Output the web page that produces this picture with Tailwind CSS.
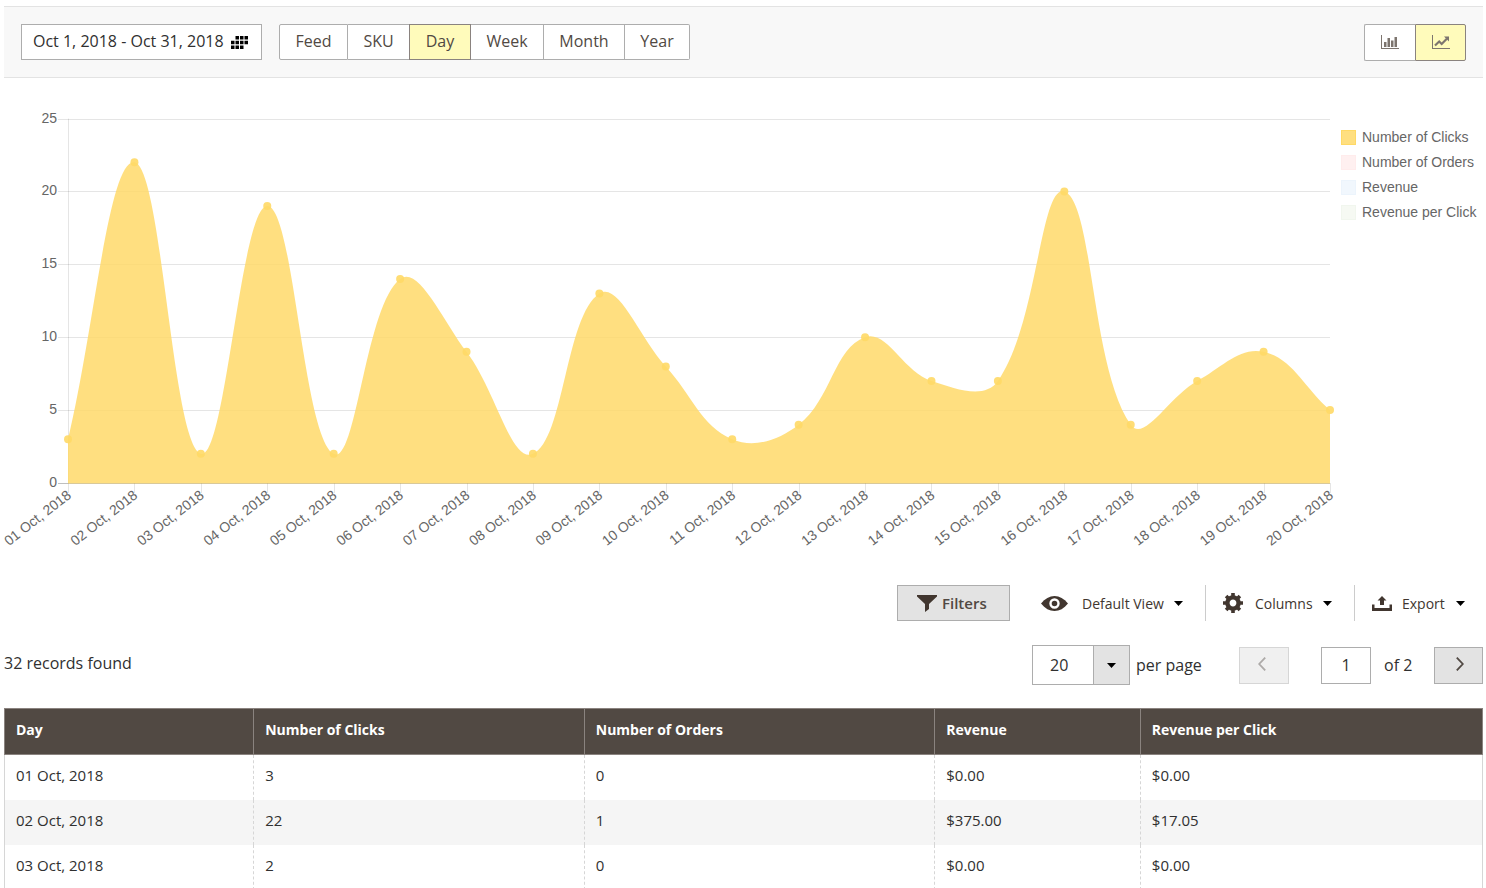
<!doctype html>
<html lang="en">

<head>
    <meta charset="utf-8">
    <meta name="viewport" content="width=device-width, initial-scale=1">
    <title>Feed Report</title>
    <script src="https://cdn.jsdelivr.net/npm/@tailwindcss/browser@4"></script>
</head>

<body class="bg-white pt-[6px] pr-[3px] pl-1 font-['Open_Sans',sans-serif] text-[#303030] overflow-x-hidden">
    <header class="flex items-start justify-between border-y border-[#e3e3e3] bg-[#f8f8f8] px-[17px] pt-[17px] pb-4">
        <div class="flex gap-[17px]">
            <button type="button" class="flex h-9 w-[241px] items-center gap-[7px] border border-[#adadad] bg-white pb-[2px] pl-[11px] text-base whitespace-nowrap">
                Oct 1, 2018 - Oct 31, 2018
                <svg class="mt-[3px] shrink-0" width="17" height="13" viewBox="0 0 17 13" fill="#000" aria-hidden="true">
                    <path d="M4.5 0h3.5v3.6h-3.5zM9 0h3.5v3.6h-3.5zM13.5 0h3.5v3.6h-3.5zM0 4.7h3.5v3.6h-3.5zM4.5 4.7h3.5v3.6h-3.5zM9 4.7h3.5v3.6h-3.5zM13.5 4.7h3.5v3.6h-3.5zM0 9.4h3.5v3.6h-3.5zM4.5 9.4h3.5v3.6h-3.5zM9 9.4h3.5v3.6h-3.5z" />
                </svg>
            </button>
            <div class="flex h-9 text-base text-[#514943]">
                <button type="button" class="w-[69px] rounded-l-xs border border-[#adadad] bg-white pb-[2px]">Feed</button>
                <button type="button" class="w-[61px] border-y border-[#adadad] bg-white pb-[2px]">SKU</button>
                <button type="button" class="w-[62px] border border-[#8a837f] bg-[#fffbbb] pb-[2px]">Day</button>
                <button type="button" class="w-[73px] border-y border-r border-[#adadad] bg-white pb-[2px]">Week</button>
                <button type="button" class="w-[81px] border-y border-r border-[#adadad] bg-white pb-[2px]">Month</button>
                <button type="button" class="w-[65px] rounded-r-xs border-y border-r border-[#adadad] bg-white pb-[2px]">Year</button>
            </div>
        </div>
        <div class="flex h-[37px] text-[#7d756f]">
            <button type="button" aria-label="Bar chart" class="flex w-[51px] items-center justify-center rounded-l-xs border-y border-l border-[#adadad] bg-white pb-[2px]">
                <svg width="18" height="14" viewBox="0 0 18 14" fill="currentColor">
                    <path d="M0 0h1v13h17v1H0zM3 7h2.500v5H3zM6.500 3h2.500v9h-2.500zM10 5.500h2.500v6.500h-2.500zM13.500 2h2.500v10h-2.500z" />
                </svg>
            </button>
            <button type="button" aria-label="Line chart" class="flex w-[51px] items-center justify-center rounded-r-xs border border-[#8a837f] bg-[#fffbbb] pb-[2px]">
                <svg width="18" height="14" viewBox="0 0 18 14" fill="currentColor">
                    <path d="M0 0h1v13h17v1H0zM12 1.500h5v5z" />
                    <path d="M3 10.500L7.200 6.500L9.700 9L14.800 3.800" fill="none" stroke="currentColor" stroke-width="2.200" />
                </svg>
            </button>
        </div>
    </header>

    <section class="flex pt-[26px]">
        <div id="chart" class="h-[461px] min-w-0 flex-1"></div>
        <ul class="flex w-[142px] flex-col gap-[5px] pt-[23px] font-['Liberation_Sans',sans-serif] text-[14px] leading-5 text-[#666]">
            <li class="flex items-center gap-[6px] whitespace-nowrap"><span class="size-[15px] border border-[#ffd966] bg-[#ffdf80]"></span>Number of Clicks</li>
            <li class="flex items-center gap-[6px] whitespace-nowrap"><span class="size-[15px] border border-[#ffecec] bg-[#fff0f0]"></span>Number of Orders</li>
            <li class="flex items-center gap-[6px] whitespace-nowrap"><span class="size-[15px] border border-[#ecf4fc] bg-[#f1f7fd]"></span>Revenue</li>
            <li class="flex items-center gap-[6px] whitespace-nowrap"><span class="size-[15px] border border-[#f1f6ee] bg-[#f6f9f3]"></span>Revenue per Click</li>
        </ul>
    </section>

    <section class="mt-5 flex h-9 justify-end text-[14px] text-[#41362f]">
        <button type="button" class="flex w-[113px] items-center gap-[5px] border border-[#adadad] bg-[#e3e3e3] pl-[19px] text-[15px] font-semibold text-[#514943]">
            <svg width="20" height="17" viewBox="0 0 20 17" fill="#41362f" aria-hidden="true"><path d="M0 0H20V1.500L12 9V14L8 17V9L0 1.500Z" /></svg>
            Filters
        </button>
        <button type="button" class="ml-[31px] flex w-[164px] items-center">
            <svg width="27" height="15" viewBox="0 0 27 15" aria-hidden="true">
                <path d="M0 7.500C4 2.500 8.500 0 13.500 0S23 2.500 27 7.500C23 12.500 18.500 15 13.500 15S4 12.500 0 7.500Z" fill="#41362f" />
                <circle cx="13.500" cy="7.500" r="4" fill="#41362f" stroke="#fff" stroke-width="2.400" />
            </svg>
            <span class="ml-[14px]">Default View</span>
            <svg class="ml-[10px]" width="9" height="5" viewBox="0 0 9 5" aria-hidden="true"><path d="M0 0H9L4.500 5Z" /></svg>
        </button>
        <button type="button" class="flex w-[149px] items-center border-l border-[#ccc] pl-[17px]">
            <svg width="20" height="20" viewBox="-10 -10 20 20" fill="none" stroke="#41362f" aria-hidden="true">
                <circle r="5.600" stroke-width="4.400" />
                <path d="M0 -10V-6M0 10V6M-10 0H-6M10 0H6M-6.900 -6.900L-4 -4M6.900 6.900L4 4M-6.900 6.900L-4 4M6.900 -6.900L4 -4" stroke-width="3.600" />
            </svg>
            <span class="ml-3">Columns</span>
            <svg class="ml-[10px]" width="9" height="5" viewBox="0 0 9 5" aria-hidden="true"><path d="M0 0H9L4.500 5Z" /></svg>
        </button>
        <button type="button" class="flex w-[129px] items-center border-l border-[#ccc] pl-[17px]">
            <svg width="20" height="15" viewBox="0 0 20 15" fill="#41362f" aria-hidden="true"><path d="M0 8.500H2.500V12H17.500V8.500H20V15H0ZM10 0L14.500 4.500H12V9H8V4.500H5.500Z" /></svg>
            <span class="ml-[10px]">Export</span>
            <svg class="ml-[11px]" width="9" height="5" viewBox="0 0 9 5" aria-hidden="true"><path d="M0 0H9L4.500 5Z" /></svg>
        </button>
    </section>

    <section class="mt-6 flex h-10 items-center text-base">
        <p class="mr-auto pb-1">32 records found</p>
        <div class="relative h-10 w-[98px]">
            <select id="page-size" class="h-full w-full appearance-none border border-[#adadad] bg-white pl-[17px]">
                <option>20</option>
                <option>30</option>
                <option>50</option>
                <option>100</option>
            </select>
            <span class="pointer-events-none absolute inset-y-0 right-0 flex w-[37px] items-center justify-center border border-[#adadad] bg-[#e3e3e3]">
                <svg width="9" height="5" viewBox="0 0 9 5" aria-hidden="true"><path d="M0 0H9L4.500 5Z" /></svg>
            </span>
        </div>
        <label for="page-size" class="ml-[6px] w-[103px]">per page</label>
        <button type="button" disabled aria-label="Previous page" class="flex h-[37px] w-[50px] items-center justify-center border border-[#d6d6d6] bg-[#f0f0f0] pr-1 pb-[2px]">
            <svg width="8" height="14" viewBox="0 0 8 14" fill="none" stroke="#adaaa8" stroke-width="1.800"><path d="M7.200 .6L1.200 7L7.200 13.400" /></svg>
        </button>
        <input id="page" type="text" value="1" class="ml-8 h-[37px] w-[50px] border border-[#adadad] bg-white text-center">
        <label for="page" class="ml-[13px] w-[50px]">of 2</label>
        <button type="button" aria-label="Next page" class="flex h-[37px] w-[49px] items-center justify-center border border-[#adadad] bg-[#e3e3e3] pb-[2px] pl-[2px]">
            <svg width="8" height="14" viewBox="0 0 8 14" fill="none" stroke="#514943" stroke-width="1.800"><path d="M.8 .6L6.800 7L.8 13.400" /></svg>
        </button>
    </section>

    <table class="mt-[23px] w-full table-fixed border-separate border-spacing-0 text-left leading-5">
        <colgroup>
            <col class="w-[16.85%]">
            <col class="w-[22.35%]">
            <col class="w-[23.7%]">
            <col class="w-[13.9%]">
            <col>
        </colgroup>
        <thead class="bg-[#514943] text-[14px] text-white">
            <tr class="h-[47px] *:border-y *:border-l *:border-[#8a837f] *:pb-1 *:pl-[11px] *:font-bold">
                <th>Day</th>
                <th>Number of Clicks</th>
                <th>Number of Orders</th>
                <th>Revenue</th>
                <th class="border-r">Revenue per Click</th>
            </tr>
        </thead>
        <tbody class="text-[15px] *:h-[45px] *:even:bg-[#f5f5f5] *:*:border-l *:*:border-[#d6d6d6] *:*:pb-[6px] *:*:pl-[11px]">
            <tr>
                <td>01 Oct, 2018</td>
                <td class="border-dashed">3</td>
                <td class="border-dashed">0</td>
                <td class="border-dashed">$0.00</td>
                <td class="border-r [border-left-style:dashed]!">$0.00</td>
            </tr>
            <tr>
                <td>02 Oct, 2018</td>
                <td class="border-dashed">22</td>
                <td class="border-dashed">1</td>
                <td class="border-dashed">$375.00</td>
                <td class="border-r [border-left-style:dashed]!">$17.05</td>
            </tr>
            <tr>
                <td>03 Oct, 2018</td>
                <td class="border-dashed">2</td>
                <td class="border-dashed">0</td>
                <td class="border-dashed">$0.00</td>
                <td class="border-r [border-left-style:dashed]!">$0.00</td>
            </tr>
        </tbody>
    </table>

    <script>
        const clicks = [3, 22, 2, 19, 2, 14, 9, 2, 13, 8, 3, 4, 10, 7, 7, 20, 4, 7, 9, 5];
        const chart = document.getElementById('chart');
        const left = 64, chartTop = 14.6, bottom = 379, maxY = 25, tension = 0.4;

        function draw() {
            const width = chart.clientWidth;
            const right = width - 11;
            const x = i => left + i * (right - left) / (clicks.length - 1);
            const y = v => bottom - v * (bottom - chartTop) / maxY;
            const pts = clicks.map((v, i) => [x(i), y(v)]);

            // control points before and after each point
            const ctrl = pts.map((p, i) => {
                const a = pts[i - 1] || p, b = pts[i + 1] || p;
                const d1 = Math.hypot(p[0] - a[0], p[1] - a[1]);
                const d2 = Math.hypot(b[0] - p[0], b[1] - p[1]);
                const f1 = tension * d1 / (d1 + d2), f2 = tension * d2 / (d1 + d2);
                return [p[0] - f1 * (b[0] - a[0]), p[1] - f1 * (b[1] - a[1]), p[0] + f2 * (b[0] - a[0]), p[1] + f2 * (b[1] - a[1])];
            });

            let line = `M${pts[0]}`;
            for (let i = 1; i < pts.length; i++) {
                line += `C${ctrl[i - 1][2]},${ctrl[i - 1][3]} ${ctrl[i][0]},${ctrl[i][1]} ${pts[i]}`;
            }

            let grid = '', labels = '';
            for (let v = 0; v <= maxY; v += 5) {
                const gy = Math.round(y(v)) + 0.5;
                grid += `<path d="M${left - 10} ${gy}H${right}" stroke="#000" stroke-opacity="${v ? 0.1 : 0.25}"/>`;
                labels += `<text x="${left - 7}" y="${Math.round(y(v)) + 4}" dx="-4" text-anchor="end">${v}</text>`;
            }
            clicks.forEach((v, i) => {
                const gx = Math.round(x(i)) + 0.5;
                grid += `<path d="M${gx} ${i ? bottom : chartTop}V${bottom + 10}" stroke="#000" stroke-opacity="0.1"/>`;
                labels += `<text transform="translate(${x(i) + 1} ${bottom + 10}) rotate(-38)" y="5" text-anchor="end">${String(i + 1).padStart(2, '0')} Oct, 2018</text>`;
            });

            chart.innerHTML = `<svg width="${width}" height="461" overflow="visible" font-family="Liberation Sans, sans-serif" font-size="14" fill="#666" role="img" aria-label="Number of Clicks">
                ${grid}
                <path d="${line}V${bottom + 0.5}H${left}Z" fill="#ffd966" fill-opacity="0.83"/>
                ${pts.map(p => `<circle cx="${p[0]}" cy="${p[1]}" r="4" fill="#ffd966" fill-opacity="0.9"/>`).join('')}
                ${labels}
            </svg>`;
        }

        new ResizeObserver(draw).observe(chart);
    </script>
</body>

</html>
